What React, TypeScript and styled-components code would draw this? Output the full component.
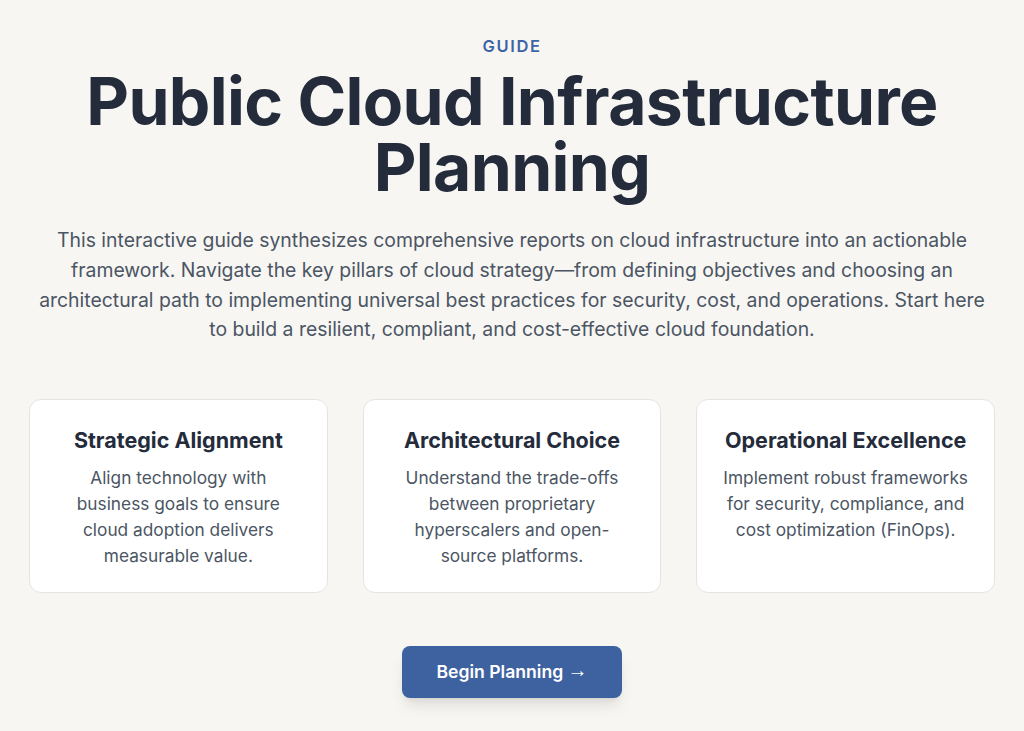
import React from "react";
import styled, { createGlobalStyle } from "styled-components";

const GlobalStyle = createGlobalStyle`
  html, body {
    margin: 0;
    padding: 0;
    background: #f7f6f3;
  }
  body {
    font-family: Inter, "Noto Sans", "Liberation Sans", sans-serif;
    color: #242b3b;
    -webkit-font-smoothing: antialiased;
  }
`;

const Page = styled.main`
  min-height: 731px;
  box-sizing: border-box;
  padding: 34px 29px 40px;
  display: flex;
  flex-direction: column;
  align-items: center;
  text-align: center;
`;

const Eyebrow = styled.div`
  font-size: 16.5px;
  line-height: 24px;
  font-weight: 600;
  letter-spacing: 0.1em;
  color: #3d64a6;
  margin-bottom: 10px;
`;

const Title = styled.h1`
  margin: 0 0 26px;
  font-size: 66px;
  line-height: 66px;
  font-weight: 700;
  letter-spacing: -0.01em;
  color: #242b3b;
`;

const Intro = styled.p`
  margin: 0 0 54px;
  font-size: 19.4px;
  line-height: 29.75px;
  color: #4b5563;
`;

const Pillars = styled.section`
  width: 100%;
  display: grid;
  grid-template-columns: repeat(3, 1fr);
  gap: 35px;
  margin-bottom: 53px;
`;

const Card = styled.article`
  background: #ffffff;
  border: 1px solid #e6e4df;
  border-radius: 12px;
  padding: 26px 25px 23px;
`;

const CardTitle = styled.h3`
  margin: 0 0 10px;
  font-size: 21.5px;
  line-height: 29px;
  font-weight: 700;
  color: #242b3b;
`;

const CardText = styled.p`
  margin: 0;
  font-size: 17.3px;
  line-height: 26px;
  color: #4b5563;
`;

const StartButton = styled.button`
  font-family: inherit;
  border: none;
  cursor: pointer;
  background: #3e62a0;
  color: #ffffff;
  font-size: 17.6px;
  line-height: 28px;
  font-weight: 600;
  padding: 12px 34px;
  border-radius: 8px;
  box-shadow: 0 10px 15px -3px rgba(0, 0, 0, 0.1), 0 4px 6px -4px rgba(0, 0, 0, 0.1);
`;

const Arrow = styled.span`
  font-family: "Liberation Sans", "DejaVu Sans", sans-serif;
  font-weight: 400;
  font-size: 20px;
  line-height: 1;
  position: relative;
  top: -1px;
`;

const pillars = [
  {
    title: "Strategic Alignment",
    text: "Align technology with business goals to ensure cloud adoption delivers measurable value.",
  },
  {
    title: "Architectural Choice",
    text: "Understand the trade-offs between proprietary hyperscalers and open-source platforms.",
  },
  {
    title: "Operational Excellence",
    text: "Implement robust frameworks for security, compliance, and cost optimization (FinOps).",
  },
];

export default function App() {
  return (
    <>
      <GlobalStyle />
      <Page>
        <Eyebrow>GUIDE</Eyebrow>
        <Title>
          Public Cloud Infrastructure
          <br />
          Planning
        </Title>
        <Intro>
          This interactive guide synthesizes comprehensive reports on cloud infrastructure into an
          actionable framework. Navigate the key pillars of cloud strategy—from defining objectives
          and choosing an architectural path to implementing universal best practices for security,
          cost, and operations. Start here to build a resilient, compliant, and cost-effective cloud
          foundation.
        </Intro>
        <Pillars>
          {pillars.map((p) => (
            <Card key={p.title}>
              <CardTitle>{p.title}</CardTitle>
              <CardText>{p.text}</CardText>
            </Card>
          ))}
        </Pillars>
        <StartButton>
          Begin Planning <Arrow>→</Arrow>
        </StartButton>
      </Page>
    </>
  );
}
